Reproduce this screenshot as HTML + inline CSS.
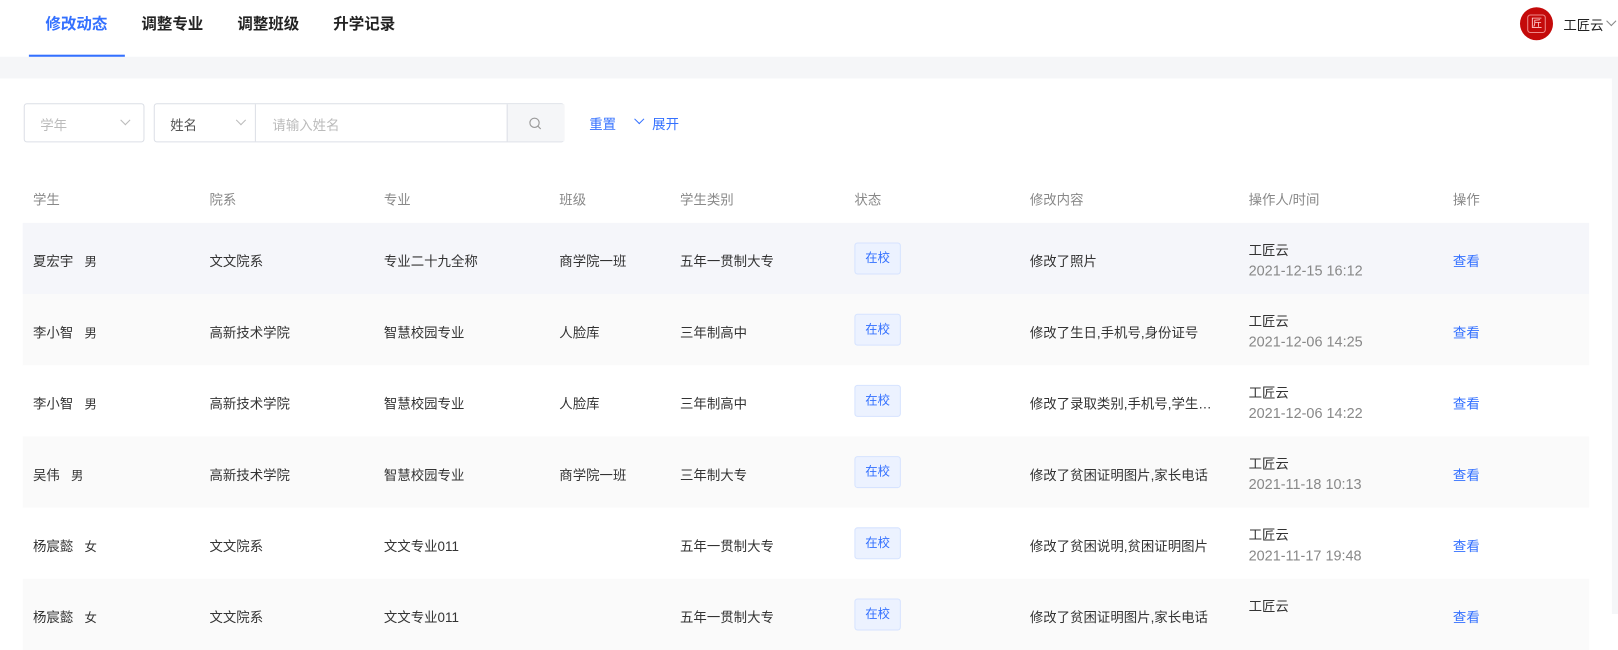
<!DOCTYPE html>
<html><head><meta charset="utf-8"><style>
*{margin:0;padding:0;box-sizing:border-box}
body{width:1618px;height:612px;overflow:hidden;background:#fff;font-family:"Liberation Sans","Noto Sans CJK SC",sans-serif;font-size:13px;color:#333;position:relative}
#w{position:absolute;left:0;top:0;width:1568px;height:594px;transform:scale(1.0319);transform-origin:0 0}
.a{position:absolute;white-space:nowrap}
.tab{top:12px;font-size:15px;font-weight:bold;color:#222}
.band{position:absolute;left:0;top:55px;width:1568px;height:21px;background:#f5f6f8}
.rs{position:absolute;left:1562px;top:55px;width:6px;height:540px;background:#f5f6f8}
.box{position:absolute;border:1px solid #dcdfe6;border-radius:3px;height:38px;top:100px}
.ph{color:#bbb}
.chev{position:absolute;width:7px;height:7px;border-right:1px solid #bbb;border-bottom:1px solid #bbb;transform:rotate(45deg)}
.hd{position:absolute;top:183px;color:#888;font-size:13px}
.row{position:absolute;left:22px;width:1518px;height:69px}
.tag{position:absolute;width:45px;height:31px;border:1px solid #d6e3ff;background:#ecf2ff;color:#3370ff;border-radius:3px;font-size:12px;text-align:center;line-height:29px}
.blue{color:#3370ff}
.tm{color:#888;font-size:14px}
</style></head><body><div id="w">
<div class="a tab blue" style="left:44px">修改动态</div>
<div class="a tab" style="left:137px">调整专业</div>
<div class="a tab" style="left:230px">调整班级</div>
<div class="a tab" style="left:323px">升学记录</div>
<div class="a" style="left:28px;top:53px;width:93px;height:3px;background:#3370ff"></div>
<div class="band"></div><div class="rs"></div>
<div class="a" style="left:1473px;top:7px;width:32px;height:32px;border-radius:50%;background:#c40a0a"><div style="position:absolute;left:7px;top:7px;width:18px;height:18px;border:1px solid #e88;border-radius:3px;color:#fcc;font-size:11px;text-align:center;line-height:16px">匠</div></div>
<div class="a" style="left:1515px;top:14px;font-size:13px;color:#222">工匠云</div>
<div class="chev" style="left:1558px;top:17px;border-color:#888"></div>

<div class="box" style="left:23px;width:117px"><span class="a ph" style="left:15px;top:10px">学年</span><div class="chev" style="left:94px;top:12px"></div></div>
<div class="box" style="left:149px;width:398px;"><span class="a" style="left:15px;top:10px;color:#555">姓名</span><div class="chev" style="left:80px;top:12px"></div>
<div style="position:absolute;left:97px;top:0;width:1px;height:36px;background:#dcdfe6"></div>
<span class="a ph" style="left:114px;top:10px">请输入姓名</span>
<div style="position:absolute;left:341px;top:0;width:56px;height:36px;background:#f5f6f8;border-left:1px solid #dcdfe6"></div>
<svg style="position:absolute;left:362px;top:12px" width="14" height="14" viewBox="0 0 14 14"><circle cx="6" cy="6" r="4.5" fill="none" stroke="#999" stroke-width="1.1"/><path d="M9.3 9.3L12 12" stroke="#999" stroke-width="1.1"/></svg></div>
<div class="a blue" style="left:571px;top:110px">重置</div>
<div class="chev" style="left:616px;top:112px;border-color:#3370ff"></div>
<div class="a blue" style="left:632px;top:110px">展开</div>

<div class="hd" style="left:32px">学生</div><div class="hd" style="left:203px">院系</div><div class="hd" style="left:372px">专业</div><div class="hd" style="left:542px">班级</div><div class="hd" style="left:659px">学生类别</div><div class="hd" style="left:828px">状态</div><div class="hd" style="left:998px">修改内容</div><div class="hd" style="left:1210px">操作人/时间</div><div class="hd" style="left:1408px">操作</div>

<div class="row" style="top:216px;background:#f5f6fa"></div>
<div class="row" style="top:285px;background:#fafafa"></div>
<div class="row" style="top:423px;background:#fafafa"></div>
<div class="row" style="top:561px;background:#fafafa"></div>

<div class="a" style="left:32px;top:243px">夏宏宇&nbsp;&nbsp;&nbsp;<span style="font-size:12px">男</span></div><div class="a" style="left:203px;top:243px">文文院系</div><div class="a" style="left:372px;top:243px">专业二十九全称</div><div class="a" style="left:542px;top:243px">商学院一班</div><div class="a" style="left:659px;top:243px">五年一贯制大专</div><div class="tag" style="left:828px;top:235px">在校</div><div class="a" style="left:998px;top:243px">修改了照片</div><div class="a" style="left:1210px;top:232px">工匠云</div><div class="a tm" style="left:1210px;top:254px">2021-12-15 16:12</div><div class="a blue" style="left:1408px;top:243px">查看</div>
<div class="a" style="left:32px;top:312px">李小智&nbsp;&nbsp;&nbsp;<span style="font-size:12px">男</span></div><div class="a" style="left:203px;top:312px">高新技术学院</div><div class="a" style="left:372px;top:312px">智慧校园专业</div><div class="a" style="left:542px;top:312px">人脸库</div><div class="a" style="left:659px;top:312px">三年制高中</div><div class="tag" style="left:828px;top:304px">在校</div><div class="a" style="left:998px;top:312px">修改了生日,手机号,身份证号</div><div class="a" style="left:1210px;top:301px">工匠云</div><div class="a tm" style="left:1210px;top:323px">2021-12-06 14:25</div><div class="a blue" style="left:1408px;top:312px">查看</div>
<div class="a" style="left:32px;top:381px">李小智&nbsp;&nbsp;&nbsp;<span style="font-size:12px">男</span></div><div class="a" style="left:203px;top:381px">高新技术学院</div><div class="a" style="left:372px;top:381px">智慧校园专业</div><div class="a" style="left:542px;top:381px">人脸库</div><div class="a" style="left:659px;top:381px">三年制高中</div><div class="tag" style="left:828px;top:373px">在校</div><div class="a" style="left:998px;top:381px">修改了录取类别,手机号,学生…</div><div class="a" style="left:1210px;top:370px">工匠云</div><div class="a tm" style="left:1210px;top:392px">2021-12-06 14:22</div><div class="a blue" style="left:1408px;top:381px">查看</div>
<div class="a" style="left:32px;top:450px">吴伟&nbsp;&nbsp;&nbsp;<span style="font-size:12px">男</span></div><div class="a" style="left:203px;top:450px">高新技术学院</div><div class="a" style="left:372px;top:450px">智慧校园专业</div><div class="a" style="left:542px;top:450px">商学院一班</div><div class="a" style="left:659px;top:450px">三年制大专</div><div class="tag" style="left:828px;top:442px">在校</div><div class="a" style="left:998px;top:450px">修改了贫困证明图片,家长电话</div><div class="a" style="left:1210px;top:439px">工匠云</div><div class="a tm" style="left:1210px;top:461px">2021-11-18 10:13</div><div class="a blue" style="left:1408px;top:450px">查看</div>
<div class="a" style="left:32px;top:519px">杨宸懿&nbsp;&nbsp;&nbsp;<span style="font-size:12px">女</span></div><div class="a" style="left:203px;top:519px">文文院系</div><div class="a" style="left:372px;top:519px">文文专业011</div><div class="a" style="left:659px;top:519px">五年一贯制大专</div><div class="tag" style="left:828px;top:511px">在校</div><div class="a" style="left:998px;top:519px">修改了贫困说明,贫困证明图片</div><div class="a" style="left:1210px;top:508px">工匠云</div><div class="a tm" style="left:1210px;top:530px">2021-11-17 19:48</div><div class="a blue" style="left:1408px;top:519px">查看</div>
<div class="a" style="left:32px;top:588px">杨宸懿&nbsp;&nbsp;&nbsp;<span style="font-size:12px">女</span></div><div class="a" style="left:203px;top:588px">文文院系</div><div class="a" style="left:372px;top:588px">文文专业011</div><div class="a" style="left:659px;top:588px">五年一贯制大专</div><div class="tag" style="left:828px;top:580px">在校</div><div class="a" style="left:998px;top:588px">修改了贫困证明图片,家长电话</div><div class="a" style="left:1210px;top:577px">工匠云</div><div class="a blue" style="left:1408px;top:588px">查看</div>
</div></body></html>
